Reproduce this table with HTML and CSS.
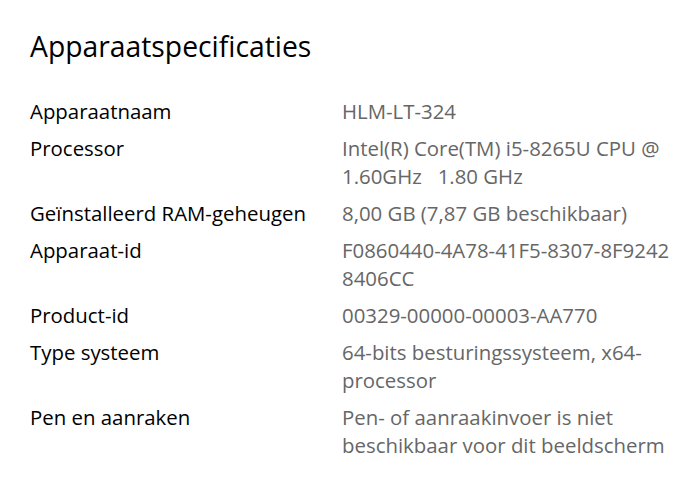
FILE: index.html
```html
<!DOCTYPE html>
<html lang="nl">
<head>
<meta charset="utf-8">
<title>Apparaatspecificaties</title>
<link rel="stylesheet" href="styles.css">
</head>
<body>
<section class="specs">
  <h1 class="specs-title">Apparaatspecificaties</h1>
  <dl class="specs-list">
    <dt>Apparaatnaam</dt>
    <dd>HLM-LT-324</dd>
    <dt>Processor</dt>
    <dd>Intel(R) Core(TM) i5-8265U CPU @<br>1.60GHz&nbsp;&nbsp;&nbsp;1.80 GHz</dd>
    <dt>Geïnstalleerd RAM-geheugen</dt>
    <dd>8,00 GB (7,87 GB beschikbaar)</dd>
    <dt>Apparaat-id</dt>
    <dd>F0860440-4A78-41F5-8307-8F9242<br>8406CC</dd>
    <dt>Product-id</dt>
    <dd>00329-00000-00003-AA770</dd>
    <dt>Type systeem</dt>
    <dd>64-bits besturingssysteem, x64-<br>processor</dd>
    <dt>Pen en aanraken</dt>
    <dd>Pen- of aanraakinvoer is niet<br>beschikbaar voor dit beeldscherm</dd>
  </dl>
</section>
</body>
</html>
```

FILE: styles.css
```css
html, body {
  margin: 0;
  padding: 0;
  background: #ffffff;
}

body {
  font-family: "Open Sans", "Noto Sans", sans-serif;
  color: #000000;
}

.specs {
  padding: 28px 0 0 30px;
}

.specs-title {
  margin: 0 0 33px 0;
  font-size: 28.3px;
  font-weight: 400;
  line-height: 36px;
}

.specs-list {
  margin: 0;
  display: grid;
  grid-template-columns: 312px 1fr;
  row-gap: 9px;
  font-size: 20.4px;
  line-height: 28px;
}

.specs-list dt {
  margin: 0;
  color: #000000;
}

.specs-list dd {
  margin: 0;
  color: #666666;
  font-size: 20.4px;
}
```
